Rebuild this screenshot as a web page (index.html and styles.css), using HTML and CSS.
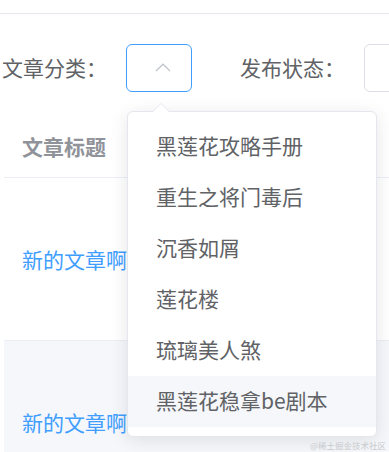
FILE: index.html
```html
<!DOCTYPE html>
<html lang="zh-CN">
<head>
<meta charset="utf-8">
<link rel="stylesheet" href="styles.css">
</head>
<body>
<div class="topbar"></div>
<div class="form">
  <div class="form-item">
    <span class="label">文章分类：</span>
    <div class="select is-focus">
      <svg class="chevron" width="16" height="9" viewBox="0 0 16 9"><path d="M1 8 L8 1.2 L15 8" fill="none" stroke="#c0c4cc" stroke-width="1.2"/></svg>
    </div>
  </div>
  <div class="form-item">
    <span class="label">发布状态：</span>
    <div class="select"></div>
  </div>
</div>
<div class="table">
  <div class="thead"><div class="cell th">文章标题</div></div>
  <div class="row"><div class="cell link">新的文章啊</div></div>
  <div class="row last hover"><div class="cell link">新的文章啊</div></div>
</div>
<div class="dropdown">
  <div class="arrow"></div>
  <ul class="options">
    <li class="option">黑莲花攻略手册</li>
    <li class="option">重生之将门毒后</li>
    <li class="option">沉香如屑</li>
    <li class="option">莲花楼</li>
    <li class="option">琉璃美人煞</li>
    <li class="option hover">黑莲花稳拿be剧本</li>
  </ul>
</div>
<div class="watermark">@稀土掘金技术社区</div>
</body>
</html>
```
FILE: styles.css
```css
html, body {
  margin: 0;
  padding: 0;
  width: 389px;
  height: 452px;
  overflow: hidden;
  background: #fff;
  font-family: "Microsoft YaHei", "Noto Sans CJK SC", "Noto Sans", sans-serif;
  position: relative;
}
.topbar {
  height: 13px;
  border-bottom: 1px solid #e4e7ed;
}
.form {
  display: flex;
  align-items: center;
  margin-top: 30px;
  padding-left: 2px;
  height: 48px;
  white-space: nowrap;
  overflow: hidden;
}
.form-item {
  display: flex;
  align-items: center;
  margin-right: 48px;
  flex: none;
}
.label {
  width: 124px;
  font-size: 21px;
  line-height: 46px;
  padding-bottom: 2px;
  color: #606266;
}
.select {
  width: 66px;
  height: 48px;
  box-sizing: border-box;
  border: 1px solid #dcdfe6;
  border-radius: 6px;
  display: flex;
  align-items: center;
  justify-content: center;
  padding-left: 8px;
}
.select.is-focus {
  border-color: #409eff;
}
.chevron {
  display: block;
  margin-top: -1px;
}
.table {
  margin-top: 26px;
  margin-left: 4px;
  white-space: nowrap;
  overflow: hidden;
}
.thead {
  height: 60px;
  border-bottom: 1px solid #ebeef5;
  display: flex;
  align-items: center;
  padding-bottom: 3px;
  box-sizing: border-box;
}
.cell {
  padding-left: 18px;
  font-size: 21px;
}
.th {
  font-weight: bold;
  color: #909399;
}
.row {
  height: 163px;
  border-bottom: 1px solid #ebeef5;
  display: flex;
  align-items: center;
  box-sizing: border-box;
}
.row.last {
  height: 111px;
  border-bottom: 0;
  align-items: flex-start;
  padding-top: 66px;
}
.row.hover {
  background: #f5f7fa;
}
.link {
  color: #409eff;
  line-height: 30px;
}
.dropdown {
  position: absolute;
  left: 127px;
  top: 111px;
  width: 250px;
  box-sizing: border-box;
  background: #fff;
  border: 1px solid #e4e7ed;
  border-radius: 6px;
  box-shadow: 0 3px 18px 0 rgba(0, 0, 0, 0.1);
}
.arrow {
  position: absolute;
  top: -9px;
  left: 24px;
  width: 0;
  height: 0;
  border-left: 9px solid transparent;
  border-right: 9px solid transparent;
  border-bottom: 9px solid #e4e7ed;
}
.arrow::after {
  content: "";
  position: absolute;
  left: -8px;
  top: 1px;
  border-left: 8px solid transparent;
  border-right: 8px solid transparent;
  border-bottom: 8px solid #fff;
}
.options {
  list-style: none;
  margin: 0;
  padding: 9px 0;
}
.option {
  height: 51px;
  line-height: 49px;
  padding-bottom: 2px;
  box-sizing: border-box;
  padding-left: 28px;
  font-size: 21px;
  color: #606266;
  white-space: nowrap;
}
.option.hover {
  background: #f5f7fa;
}
.watermark {
  position: absolute;
  right: 3px;
  bottom: 2px;
  font-size: 8.5px;
  line-height: 10px;
  color: #c8cace;
  white-space: nowrap;
}
```
